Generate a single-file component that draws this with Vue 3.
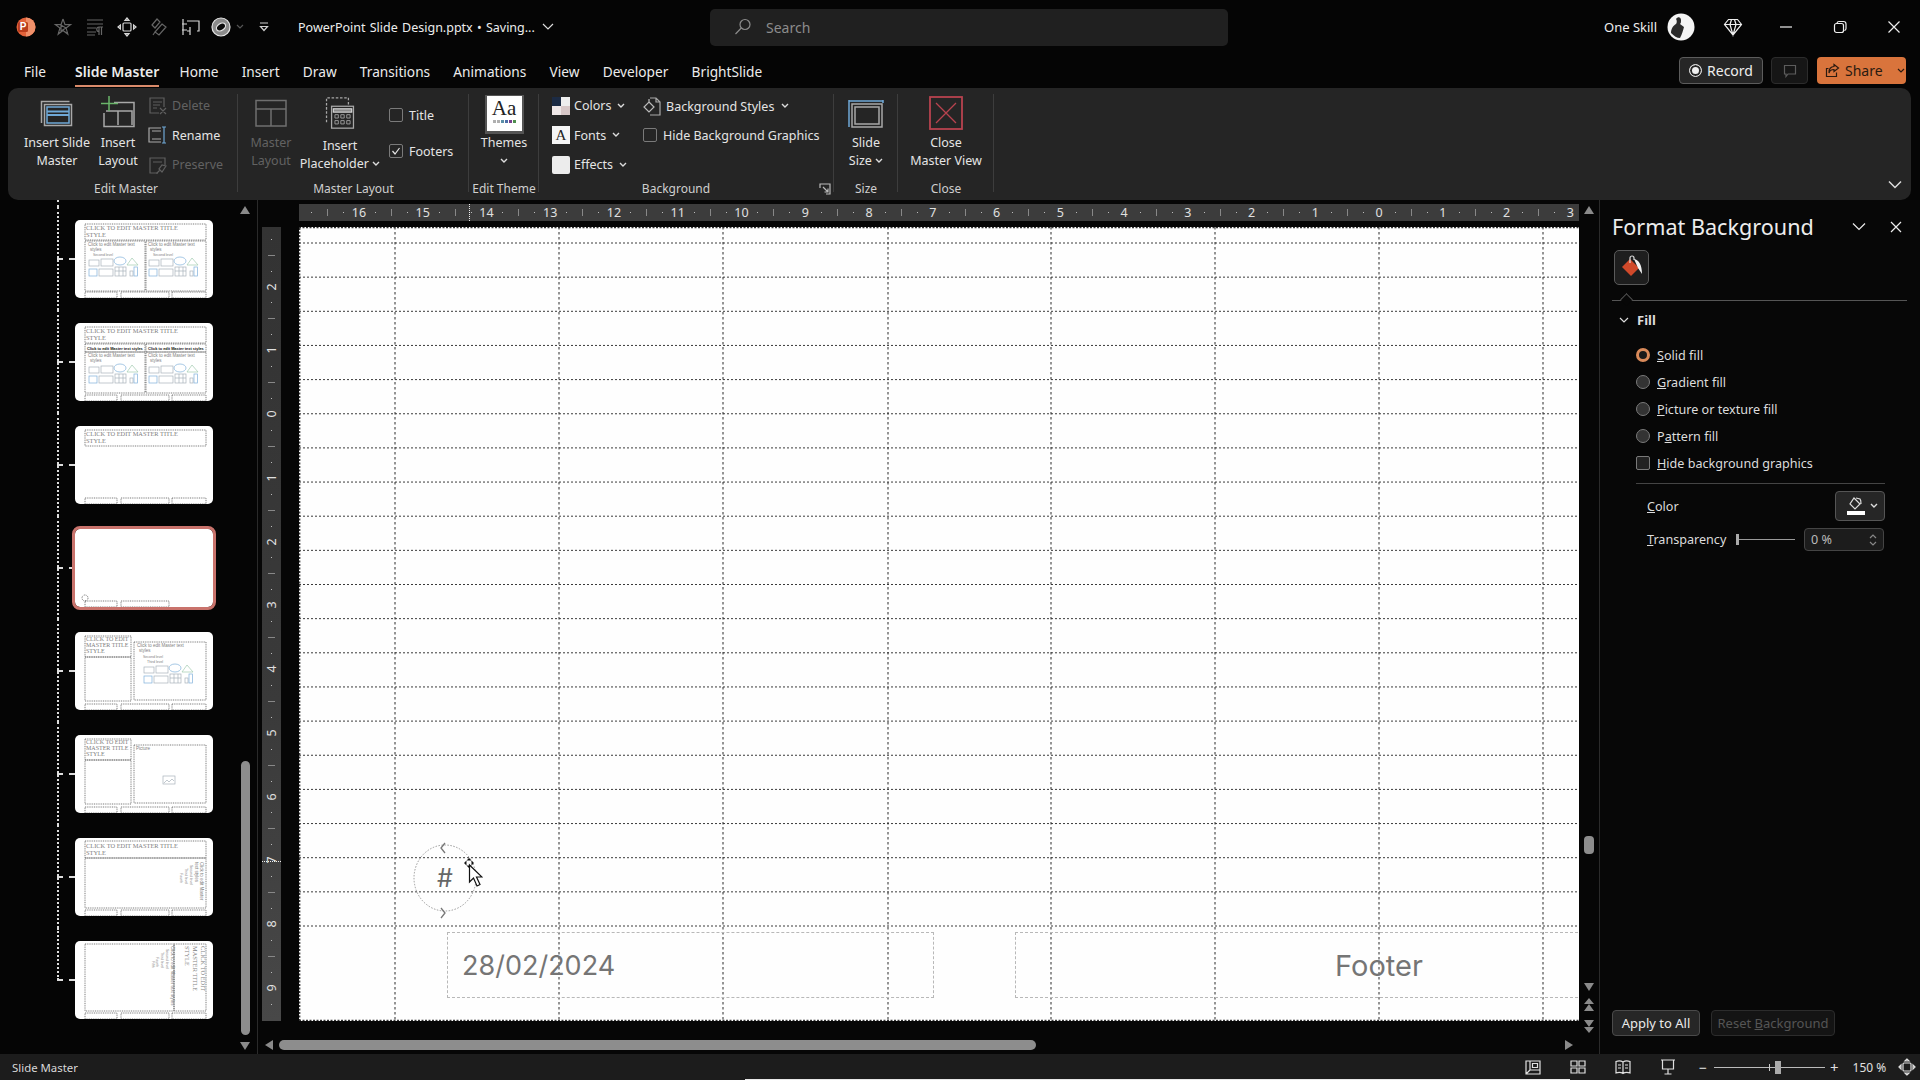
<script setup>
const tabs = ["File", "Slide Master", "Home", "Insert", "Draw", "Transitions", "Animations", "View", "Developer", "BrightSlide"];

// ruler scale, measured from the slide origin
const UNIT = 63.75;
const H_ORIGIN = 1080;
const V_ORIGIN = 187;

function rulerTicks(from, to) {
  const ticks = [];
  for (let q = from * 4; q <= to * 4; q++) {
    const value = q / 4;
    if (q % 4 === 0) ticks.push({ id: q, kind: "num", value, label: Math.abs(value) });
    else if (q % 2 === 0) ticks.push({ id: q, kind: "long", value });
    else ticks.push({ id: q, kind: "dot", value });
  }
  return ticks;
}

const hTicks = rulerTicks(-16.75, 3).map((t) => ({ ...t, pos: H_ORIGIN + t.value * UNIT }));
const vTicks = rulerTicks(-2.75, 9.25).map((t) => ({ ...t, pos: V_ORIGIN + t.value * UNIT }));

const guideX = [96, 260, 424, 589, 752, 916, 1080, 1244];
const guideY = Array.from({ length: 21 }, (_, i) => 16 + i * 34.15);

const T1 = "CLICK TO EDIT MASTER TITLE";
const threeFoot = [[10, 72, 32, 6], [46, 72, 48, 6], [97, 72, 34, 6]];

function wideTitle() {
  return [
    { x: 11, y: 10, t: T1, c: "tt" },
    { x: 11, y: 17, t: "STYLE", c: "tt" },
  ];
}
function narrowTitle() {
  return [
    { x: 11, y: 9, t: "CLICK TO EDIT", c: "tn" },
    { x: 11, y: 15, t: "MASTER TITLE", c: "tn" },
    { x: 11, y: 21, t: "STYLE", c: "tn" },
  ];
}
function bodyLines(x, y) {
  return [
    { x, y, t: "Click to edit Master text", c: "bt" },
    { x: x + 2, y: y + 5, t: "styles", c: "bt" },
    { x: x + 5, y: y + 10, t: "Second level", c: "bs" },
  ];
}

const thumbs = [
  {
    id: 1,
    boxes: [[10, 4, 121, 16], [10, 21, 60, 50], [71, 21, 60, 50], ...threeFoot],
    texts: [...wideTitle(), ...bodyLines(13, 26), ...bodyLines(73, 26)],
    art: [[14, 37], [74, 37]],
  },
  {
    id: 2,
    boxes: [[10, 4, 121, 16], [10, 21, 60, 8], [71, 21, 60, 8], [10, 29, 60, 41], [71, 29, 60, 41], ...threeFoot],
    texts: [
      ...wideTitle(),
      { x: 12, y: 27, t: "Click to edit Master text styles", c: "bh" },
      { x: 73, y: 27, t: "Click to edit Master text styles", c: "bh" },
      { x: 13, y: 34, t: "Click to edit Master text", c: "bt" },
      { x: 15, y: 39, t: "styles", c: "bt" },
      { x: 73, y: 34, t: "Click to edit Master text", c: "bt" },
      { x: 75, y: 39, t: "styles", c: "bt" },
    ],
    art: [[14, 41], [74, 41]],
  },
  { id: 3, boxes: [[10, 4, 121, 16], ...threeFoot], texts: wideTitle(), art: [] },
  { id: 4, selected: true, boxes: [[10, 72, 32, 6], [46, 72, 48, 6]], texts: [], art: [], circle: true },
  {
    id: 5,
    boxes: [[10, 4, 46, 21], [10, 25, 46, 44], [59, 10, 72, 58], ...threeFoot],
    texts: [
      ...narrowTitle(),
      { x: 62, y: 15, t: "Click to edit Master text", c: "bt" },
      { x: 64, y: 20, t: "styles", c: "bt" },
      { x: 68, y: 26, t: "Second level", c: "bs" },
      { x: 72, y: 31, t: "Third level", c: "bs" },
    ],
    art: [[69, 32]],
  },
  {
    id: 6,
    boxes: [[10, 4, 46, 21], [10, 25, 46, 44], [59, 10, 72, 58], ...threeFoot],
    texts: [...narrowTitle(), { x: 61, y: 15, t: "Picture", c: "bt" }],
    art: [],
    picture: true,
  },
  {
    id: 7,
    boxes: [[10, 3, 121, 17], [10, 20, 121, 50], ...threeFoot],
    texts: [
      ...wideTitle(),
      { x: 125, y: 24, t: "Click to edit Master", c: "bt", rot: true },
      { x: 120, y: 24, t: "text styles", c: "bt", rot: true },
      { x: 115, y: 27, t: "Second level", c: "bs", rot: true },
      { x: 110, y: 30, t: "Third level", c: "bs", rot: true },
      { x: 105, y: 35, t: "Fourth", c: "bs", rot: true },
    ],
    art: [],
  },
  {
    id: 8,
    boxes: [[10, 3, 89, 67], [99, 3, 32, 67], ...threeFoot],
    texts: [
      { x: 126, y: 5, t: "CLICK TO EDIT", c: "tt", rot: true },
      { x: 118, y: 5, t: "MASTER TITLE", c: "tt", rot: true },
      { x: 110, y: 5, t: "STYLE", c: "tt", rot: true },
      { x: 96, y: 5, t: "Click to edit Master text styles", c: "bt", rot: true },
      { x: 91, y: 8, t: "Second level", c: "bs", rot: true },
      { x: 86, y: 11, t: "Third level", c: "bs", rot: true },
      { x: 81, y: 16, t: "Fourth", c: "bs", rot: true },
      { x: 77, y: 20, t: "Fifth", c: "bs", rot: true },
    ],
    art: [],
  },
];

const fillOptions = [
  { key: "S", rest: "olid fill", on: true },
  { key: "G", rest: "radient fill" },
  { key: "P", rest: "icture or texture fill" },
  { before: "P", key: "a", rest: "ttern fill" },
];
</script>

<template>
  <div class="app">
    <header class="titlebar">
      <div class="tb-left">
        <svg class="logo" width="22" height="22" viewBox="0 0 22 22">
          <circle cx="11" cy="11" r="9.5" fill="#e2623a" />
          <path d="M11 1.5a9.5 9.5 0 0 1 0 19z" fill="#f0906a" />
          <rect x="3" y="6" width="10" height="10" rx="1.5" fill="#b93c1c" />
          <text x="8" y="14.4" text-anchor="middle" class="logo-p">P</text>
        </svg>
        <div class="qat">
          <svg class="dim" width="20" height="20" viewBox="0 0 20 20"><path d="M10 2l2 5.6h5.6l-4.5 3.5 1.7 6L10 13.4M10 2L8 7.6H2.4l4.5 3.5-1.7 6L10 13.4M8 8v6l5-3z" /></svg>
          <svg class="dim" width="20" height="20" viewBox="0 0 20 20"><path d="M2 3h16M2 7h16M2 11h9M2 15h9M2 18h8M14 18v-8h4M16.5 10v8M14 10a2.2 2.2 0 0 0 0 4.5" /></svg>
          <svg class="lit" width="20" height="20" viewBox="0 0 20 20"><rect x="6" y="6" width="8" height="8" rx="1" /><path d="M10 1L8 3.4h4zM10 19l-2-2.4h4zM1 10l2.4-2v4zM19 10l-2.4-2v4z" /></svg>
          <svg class="dim" width="20" height="20" viewBox="0 0 20 20"><path d="M8 2l3 3-5 6-3-3zM13 7l4 3-7 8-4-3zM6 15l-2 3" /></svg>
          <svg class="lit" width="20" height="20" viewBox="0 0 20 20"><path d="M2 2v16M1 7h5M1 13h5M6 4h12v10h-2M9 14H6M9 10v8" /></svg>
          <svg class="blob" width="20" height="20" viewBox="0 0 20 20"><circle cx="10" cy="10" r="9" fill="#8b8b8b" /><ellipse cx="10" cy="10" rx="5" ry="3.4" transform="rotate(-35 10 10)" fill="#0b0b0b" /></svg>
          <svg class="mini-chev" width="8" height="6" viewBox="0 0 8 6"><path d="M1 1l3 3 3-3" /></svg>
          <svg class="custom" width="12" height="12" viewBox="0 0 12 12"><path d="M2 2h8M2.5 5.5L6 9.5l3.5-4z" /></svg>
        </div>
        <span class="doc-title">PowerPoint Slide Design.pptx • Saving...</span>
        <svg class="doc-chev" width="12" height="8" viewBox="0 0 12 8"><path d="M1 1l5 5 5-5" /></svg>
      </div>
      <div class="search">
        <svg width="20" height="20" viewBox="0 0 20 20"><circle cx="12" cy="7.5" r="5" /><path d="M8.3 11L2.5 17" /></svg>
        <span>Search</span>
      </div>
      <div class="tb-right">
        <span class="user">One Skill</span>
        <svg class="avatar" width="28" height="28" viewBox="0 0 28 28">
          <circle cx="14" cy="14" r="13.5" fill="#f4f4f4" />
          <path d="M4 20c0-5 3-8 5-9 1-1 1-4 0-5 2-3 5-2 5 1 0 2 0 3-1 4l4 3c-1 4-2 7-4 11-3 0-6-2-9-5z" fill="#2b2b2b" />
        </svg>
        <svg class="gem" width="20" height="20" viewBox="0 0 20 20"><path d="M5.500 2.500h9L18.500 7.500 10 18 1.500 7.500zM1.500 7.500h17M7 7.500L10 18l3-10.500M7 7.500l1.500-5M13 7.500l-1.500-5" /></svg>
        <svg class="win" width="14" height="14" viewBox="0 0 14 14"><path d="M1 7h12" /></svg>
        <svg class="win" width="14" height="14" viewBox="0 0 14 14"><rect x="1.500" y="3.500" width="9" height="9" rx="2" /><path d="M4 3.200c.2-1.200 1-1.700 2-1.700h4.500c1.500 0 2.500 1 2.500 2.500V8.500c0 1-.5 1.800-1.700 2" /></svg>
        <svg class="win" width="14" height="14" viewBox="0 0 14 14"><path d="M1.500 1.500l11 11M12.500 1.500l-11 11" /></svg>
      </div>
    </header>

    <nav class="tabsbar">
      <div class="tabs">
        <span v-for="tab in tabs" :key="tab" class="tab" :class="{ active: tab === 'Slide Master' }">{{ tab }}</span>
      </div>
      <div class="tab-actions">
        <button class="btn-record"><i class="rec-dot"></i>Record</button>
        <button class="btn-comment">
          <svg width="14" height="14" viewBox="0 0 14 14"><path d="M1.500 1.500h11v8.500H5L3 12.500V10H1.500z" /></svg>
        </button>
        <button class="btn-share">
          <svg width="15" height="15" viewBox="0 0 15 15"><path d="M9 1.500l4.500 3.500L9 8.500V6.500C6 6.500 4.500 8 4 10c-.5-4 2-6.500 5-6.500zM3.500 5.500h-2v8h10v-4" /></svg>
          <span>Share</span>
          <svg class="share-chev" width="8" height="6" viewBox="0 0 8 6"><path d="M1 1l3 3 3-3" /></svg>
        </button>
      </div>
    </nav>

    <section class="ribbon">
      <div class="rgroup g-editmaster">
        <div class="rbody">
          <div class="big w74">
            <svg class="bigicon" width="34" height="38" viewBox="0 -3 34 38">
              <path class="g" d="M1.500 24V2.500h28" />
              <rect class="g" x="4.500" y="5.500" width="27" height="21" />
              <rect x="7" y="8" width="22" height="16" fill="none" stroke="#6fa8d6" stroke-width="1.500" />
              <path d="M7 12.500h22M7 16h22" stroke="#6fa8d6" stroke-width="2" />
            </svg>
            <span>Insert Slide</span><span>Master</span>
          </div>
          <div class="big w48">
            <svg class="bigicon" width="36" height="38" viewBox="0 1 36 38">
              <path class="g" d="M14 7.500h20v24H4V18" />
              <path class="g" d="M6 16h26v14M18 16v14" />
              <path d="M9 1v15M1 8.500h17" stroke="#6ab56a" stroke-width="1.500" fill="none" />
            </svg>
            <span>Insert</span><span>Layout</span>
          </div>
          <div class="small-col">
            <div class="srow off">
              <svg width="20" height="20" viewBox="0 0 20 20"><path d="M16 11V2H2v15h9M5 6h9M5 9h7M5 12h4M12 12l6 6M18 12l-6 6" /></svg>
              <span>Delete</span>
            </div>
            <div class="srow">
              <svg width="20" height="20" viewBox="0 0 20 20"><path d="M13 3H1v14h12M4 6h9M4 14h9" /><path class="blue" d="M16 2v16M14 2h4M14 18h4" /></svg>
              <span>Rename</span>
            </div>
            <div class="srow off">
              <svg width="20" height="20" viewBox="0 0 20 20"><path d="M10 18H2V3h15v7M5 7h9" /><path d="M18 11l-4-1-3 4 3 3zM11.500 15.500l-3 3" /></svg>
              <span>Preserve</span>
            </div>
          </div>
        </div>
        <div class="rlabel">Edit Master</div>
      </div>

      <div class="rgroup g-masterlayout">
        <div class="rbody">
          <div class="big w50 off">
            <svg class="bigicon" width="32" height="38" viewBox="0 0 32 38">
              <rect class="g" x="1" y="4.500" width="30" height="25.500" />
              <path class="g" d="M1 13h30M16 13v17" />
            </svg>
            <span>Master</span><span>Layout</span>
          </div>
          <div class="big w88 down1">
            <svg class="bigicon" width="34" height="40" viewBox="-3 0 40 47.500">
              <path class="g dash" d="M1 30V1h26v8" />
              <rect class="g" x="7" y="11" width="26" height="26" />
              <rect x="9" y="14" width="22" height="4" fill="#8a8a8a" />
              <path class="g thin" d="M11 21h4v4h-4zM18 21h4v4h-4zM25 21h4v4h-4zM11 28h4v4h-4zM18 28h4v4h-4zM25 28h4v4h-4z" />
            </svg>
            <span>Insert</span>
            <span>Placeholder <svg class="chev" width="8" height="6" viewBox="0 0 8 6"><path d="M1 1l3 3 3-3" /></svg></span>
          </div>
          <div class="checks">
            <label class="chk"><i class="box"></i>Title</label>
            <label class="chk"><i class="box"><svg width="12" height="12" viewBox="0 0 12 12"><path d="M2.500 6l2.500 3 4.500-6" /></svg></i>Footers</label>
          </div>
        </div>
        <div class="rlabel">Master Layout</div>
      </div>

      <div class="rgroup g-theme">
        <div class="rbody">
          <div class="big w70">
            <div class="theme-tile">
              <span class="aa">Aa</span>
              <div class="dots"><i></i><i></i><i></i><i></i><i></i><i></i></div>
            </div>
            <span>Themes</span>
            <svg class="chev solo" width="8" height="6" viewBox="0 0 8 6"><path d="M1 1l3 3 3-3" /></svg>
          </div>
        </div>
        <div class="rlabel">Edit Theme</div>
      </div>

      <div class="rgroup g-background">
        <div class="rbody">
          <div class="small-col bg-col1">
            <div class="srow">
              <svg class="swatch" width="18" height="18" viewBox="0 0 18 18">
                <rect width="18" height="18" fill="#eee" />
                <rect width="9" height="9" fill="#1c2b44" />
                <rect x="9" y="9" width="9" height="9" fill="#d8c8c8" />
                <rect y="9" width="9" height="9" fill="#efe8e8" />
              </svg>
              <span>Colors</span><svg class="chev" width="8" height="6" viewBox="0 0 8 6"><path d="M1 1l3 3 3-3" /></svg>
            </div>
            <div class="srow">
              <span class="font-tile">A</span>
              <span>Fonts</span><svg class="chev" width="8" height="6" viewBox="0 0 8 6"><path d="M1 1l3 3 3-3" /></svg>
            </div>
            <div class="srow">
              <i class="effect-tile"></i>
              <span>Effects</span><svg class="chev" width="8" height="6" viewBox="0 0 8 6"><path d="M1 1l3 3 3-3" /></svg>
            </div>
          </div>
          <div class="bg-col2">
            <div class="srow">
              <svg width="18" height="20" viewBox="0 0 18 20"><path d="M7 2h6l4 4v13H7M13 2v4h4" /><path d="M6 6l5 5-5 5-5-5zM6 6V3" stroke="#bbb" /></svg>
              <span>Background Styles</span><svg class="chev" width="8" height="6" viewBox="0 0 8 6"><path d="M1 1l3 3 3-3" /></svg>
            </div>
            <label class="chk"><i class="box"></i>Hide Background Graphics</label>
          </div>
        </div>
        <div class="rlabel">Background</div>
        <svg class="launcher" width="12" height="12" viewBox="0 0 12 12"><path d="M1 5V1h10v10H7M4 4l5 5M9 5.500V9H5.500" /></svg>
      </div>

      <div class="rgroup g-size">
        <div class="rbody">
          <div class="big w64">
            <svg class="bigicon" width="36" height="38" viewBox="0 -3 36 38">
              <path d="M1 28V2h34M1 2v-1M35 1v3" fill="none" stroke="#6fa8d6" stroke-width="1.500" />
              <rect class="g" x="4" y="5" width="30" height="23" />
              <rect class="g" x="7" y="8" width="24" height="17" />
            </svg>
            <span>Slide</span>
            <span>Size <svg class="chev" width="8" height="6" viewBox="0 0 8 6"><path d="M1 1l3 3 3-3" /></svg></span>
          </div>
        </div>
        <div class="rlabel">Size</div>
      </div>

      <div class="rgroup g-close">
        <div class="rbody">
          <div class="big w96">
            <svg class="bigicon" width="34" height="38" viewBox="0 0 34 38">
              <rect x="1" y="1" width="32" height="32" fill="none" stroke="#b8434f" stroke-width="1.800" />
              <path d="M7 7l20 20M27 7L7 27" stroke="#b8434f" stroke-width="1.300" />
            </svg>
            <span>Close</span><span>Master View</span>
          </div>
        </div>
        <div class="rlabel">Close</div>
      </div>

      <svg class="collapse" width="14" height="9" viewBox="0 0 14 9"><path d="M1 1.500l6 6 6-6" /></svg>
    </section>

    <main class="workspace">
      <aside class="thumbs">
        <div class="thumb-list">
          <div class="tree-top"></div>
          <div v-for="(thumb, i) in thumbs" :key="thumb.id" class="thumb-row" :class="{ last: i === thumbs.length - 1 }">
            <i class="branch"></i>
            <div class="thumb" :class="{ selected: thumb.selected }">
              <svg width="138" height="78" viewBox="0 0 138 78">
                <rect v-for="(b, n) in thumb.boxes" :key="n" class="t-box" :x="b[0]" :y="b[1]" :width="b[2]" :height="b[3]" />
                <text
                  v-for="(line, n) in thumb.texts"
                  :key="'t' + n"
                  :class="line.c"
                  :x="line.x"
                  :y="line.y"
                  :transform="line.rot ? `rotate(90 ${line.x} ${line.y})` : undefined"
                >{{ line.t }}</text>
                <g v-for="(a, n) in thumb.art" :key="'a' + n" class="t-art" :transform="`translate(${a[0]} ${a[1]})`">
                  <rect x="0" y="3" width="10" height="6" />
                  <rect x="12" y="2" width="12" height="7" />
                  <ellipse cx="31" cy="4" rx="6" ry="4" class="a-blue" />
                  <path d="M38 8l5-7 6 7z" class="a-green" />
                  <rect x="0" y="12" width="8" height="7" class="a-blue" />
                  <rect x="10" y="12" width="14" height="7" />
                  <rect x="26" y="10" width="11" height="9" />
                  <path d="M30 10v9M34 10v9M26 14h11" />
                  <rect x="41" y="14" width="3" height="5" />
                  <rect x="45" y="10" width="3.500" height="9" class="a-blue" />
                </g>
                <g v-if="thumb.picture" class="t-art" transform="translate(88 41)">
                  <rect width="12" height="8" />
                  <path d="M1 7l3-3 2 2 3-3 2 2" />
                </g>
                <ellipse v-if="thumb.circle" class="t-box" cx="10" cy="69" rx="3" ry="3" />
              </svg>
            </div>
          </div>
        </div>
        <div class="thumb-scroll">
          <i class="tri up"></i>
          <div class="thumb-track"><i class="thumb-knob"></i></div>
          <i class="tri down"></i>
        </div>
      </aside>

      <section class="editor">
        <div class="h-ruler">
          <template v-for="t in hTicks" :key="t.id">
            <span v-if="t.kind === 'num'" class="r-num" :style="{ left: t.pos + 'px' }">{{ t.label }}</span>
            <i v-else :class="t.kind === 'long' ? 'r-long' : 'r-dot'" :style="{ left: t.pos + 'px' }"></i>
          </template>
          <i class="h-mark"></i>
        </div>

        <div class="v-ruler">
          <template v-for="t in vTicks" :key="t.id">
            <span v-if="t.kind === 'num'" class="rv-num" :style="{ top: t.pos + 'px' }">{{ t.label }}</span>
            <i v-else :class="t.kind === 'long' ? 'rv-long' : 'rv-dot'" :style="{ top: t.pos + 'px' }"></i>
          </template>
          <i class="v-mark"></i>
        </div>

        <div class="slide">
          <svg class="guides" width="1280" height="794" viewBox="0 0 1280 794">
            <path class="edge" d="M.7 794V0M0 .7H1280M0 793.300H1280" />
            <line v-for="y in guideY" :key="'h' + y" class="guide-h" x1="0" x2="1280" :y1="y" :y2="y" />
            <line v-for="x in guideX" :key="'v' + x" class="guide-v" :x1="x" :x2="x" y1="0" y2="794" />
            <ellipse class="page-ring" cx="146" cy="651" rx="31" ry="33" />
            <path class="page-handle" d="M146 616l-4 5 4 5M142 681l4 5-4 5" />
          </svg>
          <div class="ph date"><span>28/02/2024</span></div>
          <div class="ph foot"><span>Footer</span></div>
          <span class="page-num">#</span>
          <svg class="pointer" width="20" height="34" viewBox="0 0 20 34">
            <path d="M6 1l2.500 2.500h-5zM6 11l2.500-2.500h-5zM1 6l2.500-2.500v5zM11 6L8.500 3.500v5z" fill="#111" />
            <path d="M6.500 8v17l4-4 3.500 8 3-1.500-3.500-7.500h5.500z" fill="#fff" stroke="#111" />
          </svg>
        </div>

        <div class="v-scroll">
          <i class="tri up"></i>
          <div class="v-track"><i class="v-knob"></i></div>
          <i class="tri down"></i>
          <svg class="dbl" width="14" height="14" viewBox="0 0 14 14"><path d="M7 0l5 6H2zM7 6l5 7H2z" /></svg>
          <svg class="dbl" width="14" height="14" viewBox="0 0 14 14"><path d="M7 14l5-6H2zM7 8l5-7H2z" /></svg>
        </div>

        <div class="h-scroll">
          <i class="tri left"></i>
          <div class="h-track"><i class="h-knob"></i></div>
          <i class="tri right"></i>
        </div>
      </section>

      <aside class="pane">
        <div class="pane-head">
          <h2>Format Background</h2>
          <svg width="14" height="9" viewBox="0 0 14 9"><path d="M1 1.500l6 6 6-6" /></svg>
          <svg width="12" height="12" viewBox="0 0 12 12"><path d="M1 1l10 10M11 1L1 11" /></svg>
        </div>
        <div class="pane-tabs">
          <div class="fill-tab">
            <svg width="28" height="28" viewBox="0 0 28 28">
              <path d="M12 5l9 9-8 8-9-9z" fill="#d0492a" />
              <path d="M12 9V4a2 2 0 0 1 4 0v2" fill="none" stroke="#ddd" stroke-width="1.200" />
              <path d="M16 5c5 1 8 6 8 15-1.500-2-2.500-4-4-6z" fill="#f2f2f2" />
            </svg>
          </div>
        </div>
        <div class="pane-rule"><i></i></div>
        <div class="section-head">
          <svg width="10" height="7" viewBox="0 0 10 7"><path d="M1 1l4 4 4-4" /></svg>
          <strong>Fill</strong>
        </div>
        <div class="options">
          <label v-for="opt in fillOptions" :key="opt.rest" class="opt">
            <i class="radio" :class="{ on: opt.on }"></i>
            <span>{{ opt.before }}<u>{{ opt.key }}</u>{{ opt.rest }}</span>
          </label>
          <label class="opt">
            <i class="square"></i>
            <span><u>H</u>ide background graphics</span>
          </label>
        </div>
        <div class="pane-sep"></div>
        <div class="prop color-prop">
          <span><u>C</u>olor</span>
          <button class="color-btn">
            <svg width="20" height="20" viewBox="0 0 20 20">
              <path d="M8 2l6 6-5 5-5-5zM10 2l4 1c1 1 1 3 1 5" fill="none" stroke="#ddd" stroke-width="1.200" />
              <rect x="1" y="15" width="18" height="4" fill="#fff" />
            </svg>
            <svg class="chev lit-chev" width="8" height="6" viewBox="0 0 8 6"><path d="M1 1l3 3 3-3" /></svg>
          </button>
        </div>
        <div class="prop trans-prop">
          <span class="trans-label"><u>T</u>ransparency</span>
          <div class="slider"><i></i></div>
          <div class="spin">
            <span>0 %</span>
            <div class="spin-arrows">
              <svg width="8" height="5" viewBox="0 0 8 5"><path d="M1 4l3-3 3 3" /></svg>
              <svg width="8" height="5" viewBox="0 0 8 5"><path d="M1 1l3 3 3-3" /></svg>
            </div>
          </div>
        </div>
        <div class="pane-actions">
          <button class="act">Apply to All</button>
          <button class="act disabled">Reset <u>B</u>ackground</button>
        </div>
      </aside>
    </main>

    <footer class="statusbar">
      <span class="st-label">Slide Master</span>
      <div class="st-right">
        <svg width="16" height="15" viewBox="0 0 16 15"><path d="M1 1h14v13H1zM5 1v9h10M7.500 3.500h5v4h-5zM5 10l-4 4" /></svg>
        <svg class="gap-s" width="16" height="14" viewBox="0 0 16 14"><path d="M1 1h6v5H1zM9 1h6v5H9zM1 8h6v5H1zM9 8h6v5H9z" /></svg>
        <svg class="gap-s" width="16" height="15" viewBox="0 0 16 15"><path d="M1 1.500c2.500-.8 5-.8 7 .5 2-1.300 4.500-1.300 7-.5v11.500c-2.500-.8-5-.8-7 .5-2-1.300-4.500-1.300-7-.5zM8 2v11.500M3 5h3M3 8h3M10 5h3M10 8h3" /></svg>
        <svg class="gap-s" width="16" height="16" viewBox="0 0 16 16"><path d="M1 1h14M2.500 1v9h11V1M8 10v5M4.500 15h7" /></svg>
        <span class="zoom-minus">−</span>
        <div class="zoom-track"><i class="zoom-center"></i><i class="zoom-knob"></i></div>
        <span class="zoom-plus">+</span>
        <span class="zoom-val">150 %</span>
        <svg class="fit" width="18" height="18" viewBox="0 0 18 18"><rect x="5" y="5" width="8" height="8" rx="1" /><path d="M9 1L7 3h4zM9 17l-2-2h4zM1 9l2-2v4zM17 9l-2-2v4z" /></svg>
      </div>
    </footer>
  </div>
</template>

<style>
html,
body {
  margin: 0;
  background: #050505;
}
</style>

<style scoped>
.app {
  width: 1920px;
  height: 1080px;
  overflow: hidden;
  display: flex;
  flex-direction: column;
  background: #050505;
  color: #e6e6e6;
  font-family: "Noto Sans", "Open Sans", sans-serif;
  font-size: 13px;
}

svg {
  flex: none;
  fill: none;
  stroke: currentColor;
  stroke-width: 1.2;
}

button {
  font-family: inherit;
  padding: 0;
  cursor: default;
}

/* title bar */
.titlebar {
  height: 56px;
  flex: none;
  display: flex;
  align-items: center;
  padding-bottom: 2px;
  box-sizing: border-box;
}

.tb-left {
  width: 710px;
  display: flex;
  align-items: center;
  padding-left: 15px;
  box-sizing: border-box;
}

.logo {
  stroke: none;
}

.logo-p {
  font: 700 10px "Liberation Sans", sans-serif;
  fill: #fff;
  stroke: none;
}

.qat {
  display: flex;
  align-items: center;
  gap: 12px;
  margin-left: 16px;
}

.qat .dim {
  color: #666;
}

.qat .lit {
  color: #d8d8d8;
}

.qat .blob {
  margin-left: -2px;
}

.qat .mini-chev {
  color: #555;
  margin-left: -7px;
}

.qat .custom {
  color: #cfcfcf;
  margin-left: 2px;
}

.doc-title {
  margin-left: 28px;
  font-size: 12.5px;
  color: #ededed;
  white-space: nowrap;
  word-spacing: 1px;
}

.doc-chev {
  margin-left: 7px;
  color: #ddd;
}

.search {
  width: 518px;
  height: 37px;
  border-radius: 5px;
  background: #202020;
  display: flex;
  align-items: center;
  gap: 13px;
  padding-left: 23px;
  box-sizing: border-box;
  color: #8c8c8c;
  font-size: 14px;
}

.tb-right {
  flex: 1;
  display: flex;
  align-items: center;
  padding-left: 376px;
  color: #eee;
}

.user {
  font-size: 13px;
  white-space: nowrap;
}

.avatar {
  margin-left: 10px;
  stroke: none;
}

.gem {
  margin-left: 28px;
}

.win {
  margin-left: 36px;
}

.gem + .win {
  margin-left: 36px;
}

.win + .win {
  margin-left: 40px;
}

/* tabs */
.tabsbar {
  height: 32px;
  flex: none;
  display: flex;
  align-items: center;
  justify-content: space-between;
  padding: 0 14px 0 24px;
}

.tabs {
  display: flex;
  gap: 23.2px;
}

.tab {
  font-size: 13.7px;
  line-height: 26px;
  color: #ececec;
  white-space: nowrap;
  position: relative;
}

.tab:first-child {
  margin-right: 6px;
}

.tab.active {
  font-size: 14px;
  font-weight: 600;
  margin-right: -3px;
}

.tab.active::after {
  content: "";
  position: absolute;
  left: 0;
  right: 0;
  bottom: -2px;
  height: 2px;
  background: #d98a6a;
}

.tab-actions {
  display: flex;
  align-items: center;
  height: 28px;
  margin-top: -3px;
}

.btn-record {
  width: 84px;
  height: 27px;
  box-sizing: border-box;
  border: 1px solid #5c5c5c;
  border-radius: 4px;
  background: #262626;
  color: #eee;
  font-size: 14px;
  display: flex;
  align-items: center;
  justify-content: center;
  gap: 5px;
}

.rec-dot {
  width: 13px;
  height: 13px;
  box-sizing: border-box;
  border-radius: 50%;
  border: 1px solid #ddd;
  background: #eee;
  box-shadow: inset 0 0 0 2px #262626;
}

.btn-comment {
  width: 37px;
  height: 27px;
  margin-left: 8px;
  box-sizing: border-box;
  border: 1px solid #2c2c2c;
  border-radius: 4px;
  background: #161616;
  color: #5c5c5c;
  display: flex;
  align-items: center;
  justify-content: center;
}

.btn-share {
  width: 89px;
  height: 27px;
  margin-left: 9px;
  border: 0;
  border-radius: 4px;
  background: #d9743c;
  color: #2a1a10;
  font-size: 14px;
  display: flex;
  align-items: center;
  padding-left: 8px;
  box-sizing: border-box;
  gap: 5px;
}

.share-chev {
  margin-left: 9px;
}

/* ribbon */
.ribbon {
  height: 112px;
  flex: none;
  margin: 0 9px 0 8px;
  border-radius: 10px;
  background: #252525;
  display: flex;
  position: relative;
  font-size: 12.5px;
  color: #e4e4e4;
}

.rgroup {
  display: flex;
  flex-direction: column;
  position: relative;
  box-sizing: border-box;
}

.rgroup::after {
  content: "";
  position: absolute;
  right: 0;
  top: 6px;
  bottom: 8px;
  width: 1px;
  background: #3d3d3d;
}

.rbody {
  height: 91px;
  display: flex;
}

.rlabel {
  height: 20px;
  line-height: 20px;
  text-align: center;
  font-size: 12px;
  color: #cfcfcf;
}

.g-editmaster {
  width: 230px;
  padding-left: 12px;
}

.g-editmaster .rlabel {
  margin-left: -6px;
}

.g-masterlayout {
  width: 231px;
  padding-left: 8px;
}

.g-masterlayout .rlabel {
  margin-left: -8px;
}

.g-theme {
  width: 70px;
}

.g-background {
  width: 295px;
  padding-left: 13px;
}

.g-background .rlabel {
  margin: 0 21px 0 -13px;
}

.g-size {
  width: 64px;
}

.g-close {
  width: 96px;
}

.big {
  display: flex;
  flex-direction: column;
  align-items: center;
  padding-top: 8px;
  line-height: 18px;
  white-space: nowrap;
  box-sizing: border-box;
}

.big span {
  display: block;
}

.bigicon .g {
  stroke: #a8a8a8;
  stroke-width: 1.500;
}

.bigicon .thin {
  stroke-width: 1;
}

.bigicon .dash {
  stroke-dasharray: 3 2;
}

.w74 {
  width: 74px;
}

.w48 {
  width: 48px;
}

.w50 {
  width: 50px;
}

.w88 {
  width: 88px;
}

.w70 {
  width: 70px;
}

.w64 {
  width: 64px;
}

.w96 {
  width: 96px;
}

.down1 {
  padding-top: 9px;
}

.off,
.off svg {
  color: #626262;
}

.off .g {
  stroke: #6f6f6f;
}

.small-col {
  display: flex;
  flex-direction: column;
  justify-content: center;
  gap: 9.5px;
  margin-left: 6px;
  padding-top: 3px;
}

.srow {
  display: flex;
  align-items: center;
  gap: 4px;
  height: 20px;
  white-space: nowrap;
}

.srow svg {
  color: #aaa;
}

.srow.off svg {
  color: #5f5f5f;
}

.srow .blue {
  stroke: #6fa8d6;
}

.chev {
  display: inline-block;
  stroke-width: 1.400;
  color: #ddd;
  vertical-align: 1px;
}

.chev.solo {
  margin-top: 6px;
}

.srow .chev {
  color: #ddd;
  margin-left: 2px;
}

.checks {
  display: flex;
  flex-direction: column;
  gap: 16px;
  margin-left: 5px;
  padding-top: 17px;
}

.chk {
  display: flex;
  align-items: center;
  gap: 6px;
  height: 20px;
  white-space: nowrap;
}

.box {
  width: 14px;
  height: 14px;
  box-sizing: border-box;
  border: 1px solid #7a7a7a;
  border-radius: 2px;
  display: flex;
  align-items: center;
  justify-content: center;
}

.theme-tile {
  width: 35px;
  height: 35px;
  margin-bottom: 3px;
  background: #fff;
  box-shadow: 0 1px 0 2px #555;
  display: flex;
  flex-direction: column;
  align-items: center;
  overflow: hidden;
}

.aa {
  font: 21px/24px "Liberation Serif", serif;
  color: #222;
}

.dots {
  display: flex;
  gap: 1px;
}

.dots i {
  width: 3px;
  height: 3px;
  background: #b0b0b0;
}

.dots i:nth-child(3) {
  background: #5b8fa8;
}

.dots i:nth-child(4) {
  background: #4d6fa8;
}

.dots i:nth-child(5) {
  background: #7a3f8f;
}

.dots i:nth-child(6) {
  background: #4f8f4f;
}

.bg-col1 {
  width: 91px;
  margin-left: 0;
}

.swatch,
.srow .swatch {
  stroke: none;
}

.font-tile {
  width: 18px;
  height: 18px;
  background: #f5f5f5;
  color: #222;
  font: 15px/18px "Liberation Serif", serif;
  text-align: center;
}

.effect-tile {
  width: 18px;
  height: 18px;
  border-radius: 2px;
  background: #ececec;
}

.bg-col2 {
  display: flex;
  flex-direction: column;
  gap: 9px;
  padding-top: 8px;
}

.bg-col2 .srow {
  gap: 5px;
}

.launcher {
  position: absolute;
  right: 3px;
  bottom: 5px;
  color: #bbb;
}

.collapse {
  position: absolute;
  right: 9px;
  bottom: 11px;
  color: #ddd;
  stroke-width: 1.500;
}

/* workspace */
.workspace {
  flex: 1;
  min-height: 0;
  display: flex;
}

.thumbs {
  width: 258px;
  flex: none;
  display: flex;
  box-sizing: border-box;
  border-right: 1px solid #2a2a2a;
  overflow: hidden;
}

.thumb-list {
  width: 238px;
  flex: none;
  padding-left: 57px;
  box-sizing: border-box;
}

.tree-top {
  height: 7px;
  border-left: 2px dotted #ddd;
}

.thumb-row {
  height: 103px;
  display: flex;
  align-items: center;
  position: relative;
}

.thumb-row::before {
  content: "";
  position: absolute;
  left: 0;
  top: 0;
  bottom: 0;
  border-left: 2px dotted #ddd;
}

.thumb-row.last::before {
  bottom: 50%;
}

.branch {
  width: 18px;
  flex: none;
  border-top: 2px dashed #ddd;
}

.thumb {
  width: 138px;
  height: 78px;
  flex: none;
  background: #fff;
  border-radius: 5px;
  overflow: hidden;
}

.thumb.selected {
  outline: 3px solid #c9736c;
  outline-offset: 0;
  box-shadow: 0 0 0 1px #000;
}

.thumb svg {
  display: block;
  stroke: none;
}

.t-box {
  fill: none;
  stroke: #444;
  stroke-width: 0.7;
  stroke-dasharray: 1 0.8;
}

.tt {
  font: 6.4px "Liberation Serif", serif;
  fill: #808080;
}

.tn {
  font: 6px "Liberation Serif", serif;
  fill: #808080;
}

.bt {
  font: 4.5px "Liberation Sans", sans-serif;
  fill: #808080;
}

.bs {
  font: 3.500px "Liberation Sans", sans-serif;
  fill: #808080;
}

.bh {
  font: 700 3.900px "Liberation Sans", sans-serif;
  fill: #111;
}

.t-art {
  fill: none;
  stroke: #a8b2ba;
  stroke-width: 0.7;
}

.a-blue {
  stroke: #7fb0da;
}

.a-green {
  stroke: #a2cbb0;
}

.thumb-scroll {
  width: 10px;
  margin-left: 2px;
  display: flex;
  flex-direction: column;
  align-items: center;
  padding: 6px 0 4px;
  box-sizing: border-box;
  height: 100%;
}

.thumb-track {
  flex: 1;
  width: 9px;
  position: relative;
  margin: 3px 0;
}

.thumb-knob {
  position: absolute;
  left: 0;
  right: 0;
  top: 544px;
  height: 274px;
  border-radius: 5px;
  background: #8d8d8d;
}

.tri {
  width: 0;
  height: 0;
  flex: none;
  border-style: solid;
  border-color: transparent;
}

.tri.up {
  border-width: 0 5px 8px;
  border-bottom-color: #8a8a8a;
}

.tri.down {
  border-width: 8px 5px 0;
  border-top-color: #8a8a8a;
}

.tri.left {
  border-width: 5px 8px 5px 0;
  border-right-color: #8a8a8a;
}

.tri.right {
  border-width: 5px 0 5px 8px;
  border-left-color: #8a8a8a;
}

/* editor */
.editor {
  width: 1341px;
  flex: none;
  box-sizing: border-box;
  padding: 4px 0 0 4px;
  display: grid;
  grid-template-columns: 19px 18px 1280px 2px 15px;
  grid-template-rows: 17px 6px 794px 33px;
  background: #060606;
}

.h-ruler {
  grid-column: 3;
  grid-row: 1;
  position: relative;
  background: #3c3c3c;
  overflow: hidden;
}

.r-num {
  position: absolute;
  top: 0;
  line-height: 17px;
  font-size: 12.5px;
  color: #e0e0e0;
  transform: translateX(-50%);
}

.r-dot {
  position: absolute;
  top: 8px;
  width: 1px;
  height: 1px;
  background: #bbb;
}

.r-long {
  position: absolute;
  top: 5px;
  width: 1px;
  height: 7px;
  background: #888;
}

.h-mark {
  position: absolute;
  left: 170px;
  top: 0;
  bottom: 0;
  border-left: 1px dotted #eee;
}

.v-ruler {
  grid-column: 1;
  grid-row: 3;
  position: relative;
  background: linear-gradient(#333, #3a3a3a 60%, #484848);
  overflow: hidden;
}

.rv-num {
  position: absolute;
  left: 0;
  width: 19px;
  line-height: 14px;
  margin-top: -7px;
  font-size: 12.5px;
  text-align: center;
  color: #e0e0e0;
  transform: rotate(-90deg);
}

.rv-dot {
  position: absolute;
  left: 9px;
  width: 1px;
  height: 1px;
  background: #bbb;
}

.rv-long {
  position: absolute;
  left: 6px;
  width: 7px;
  height: 1px;
  background: #888;
}

.v-mark {
  position: absolute;
  left: 0;
  right: 0;
  top: 634px;
  border-top: 1px dotted #eee;
}

.slide {
  grid-column: 3;
  grid-row: 3;
  position: relative;
  overflow: hidden;
  background: #fefefe;
}

.guides {
  position: absolute;
  inset: 0;
  stroke: none;
}

.edge {
  stroke: #333;
  stroke-width: 1.300;
  stroke-dasharray: 2 1.500;
}

.guide-h {
  stroke: #3a3a3a;
  stroke-width: 1;
  stroke-dasharray: 2 2;
}

.guide-v {
  stroke: #2a2a2a;
  stroke-width: 1;
  stroke-dasharray: 2.500 2.500;
}

.page-ring {
  fill: none;
  stroke: #999;
  stroke-dasharray: 1.500 1.500;
  stroke-width: 1;
}

.page-handle {
  fill: none;
  stroke: #777;
  stroke-width: 1.300;
}

.ph {
  position: absolute;
  top: 705px;
  height: 66px;
  box-sizing: border-box;
  border: 1px dashed #b8b8b8;
  display: flex;
  align-items: center;
  color: #757575;
  font-family: Inter, "Noto Sans", sans-serif;
  font-size: 29px;
}

.date {
  left: 148px;
  width: 487px;
  padding-left: 14px;
  font-size: 27px;
}

.foot {
  left: 716px;
  width: 728px;
  justify-content: center;
}

.page-num {
  position: absolute;
  left: 146px;
  top: 636px;
  transform: translateX(-50%);
  font-family: Inter, sans-serif;
  font-size: 25px;
  line-height: 30px;
  color: #666;
}

.pointer {
  position: absolute;
  left: 164px;
  top: 630px;
  stroke: none;
}

.v-scroll {
  grid-column: 5;
  grid-row: 1 / 5;
  display: flex;
  flex-direction: column;
  align-items: center;
  padding: 2px 0 21px;
  box-sizing: border-box;
}

.v-track {
  flex: 1;
  width: 10px;
  position: relative;
}

.v-knob {
  position: absolute;
  left: 0;
  right: 0;
  top: 622px;
  height: 18px;
  border-radius: 4px;
  background: #8d8d8d;
}

.dbl {
  margin-top: 7px;
  fill: #8a8a8a;
  stroke: none;
}

.h-scroll {
  grid-column: 1 / 4;
  grid-row: 4;
  display: flex;
  align-items: center;
  gap: 5px;
  padding: 14px 6px 0 3px;
  height: 33px;
  box-sizing: border-box;
}

.h-track {
  flex: 1;
  height: 10px;
  position: relative;
}

.h-knob {
  position: absolute;
  left: 1px;
  top: 0;
  width: 757px;
  height: 10px;
  border-radius: 5px;
  background: #8d8d8d;
}

/* format pane */
.pane {
  flex: 1;
  position: relative;
  border-left: 1px solid #2a2a2a;
  box-sizing: border-box;
  padding-left: 12px;
  display: flex;
  flex-direction: column;
  background: #070707;
  color: #dcdcdc;
  font-size: 12.6px;
}

.pane-head {
  height: 50px;
  display: flex;
  align-items: center;
  padding-top: 3px;
  box-sizing: border-box;
  color: #ededed;
}

.pane-head h2 {
  margin: 0;
  font-size: 21.6px;
  font-weight: 400;
  width: 240px;
  white-space: nowrap;
}

.pane-head svg:last-child {
  margin-left: 24px;
}

.fill-tab {
  width: 35px;
  height: 35px;
  box-sizing: border-box;
  border: 1px solid #5a5a5a;
  border-radius: 5px;
  background: #1e1e1e;
  margin-left: 2px;
  display: flex;
  align-items: center;
  justify-content: center;
}

.fill-tab svg {
  stroke: none;
}

.pane-rule {
  margin-top: 15px;
  width: 295px;
  height: 1px;
  background: #555;
  position: relative;
}

.pane-rule i {
  position: absolute;
  left: 10px;
  top: -5px;
  width: 9px;
  height: 9px;
  box-sizing: border-box;
  border-left: 1px solid #555;
  border-top: 1px solid #555;
  background: #070707;
  transform: rotate(45deg);
}

.section-head {
  display: flex;
  align-items: center;
  gap: 8px;
  margin: 9px 0 0 7px;
  height: 20px;
}

.section-head strong {
  font-size: 13px;
  font-weight: 700;
}

.options {
  margin: 15px 0 0 24px;
  display: flex;
  flex-direction: column;
  gap: 7px;
}

.opt {
  display: flex;
  align-items: center;
  gap: 7px;
  height: 20px;
  white-space: nowrap;
}

.radio {
  width: 14px;
  height: 14px;
  box-sizing: border-box;
  border-radius: 50%;
  border: 1px solid #7a7a7a;
  background: #333;
}

.radio.on {
  border: 3.500px solid #d98a5a;
  background: #1a1a1a;
}

.square {
  width: 14px;
  height: 14px;
  box-sizing: border-box;
  border: 1px solid #7a7a7a;
  border-radius: 2px;
  background: #222;
}

.pane-sep {
  margin: 10px 0 0 24px;
  width: 249px;
  height: 1px;
  background: #444;
}

.prop {
  display: flex;
  align-items: center;
  margin-left: 35px;
}

.color-prop {
  margin-top: 7px;
  justify-content: space-between;
  width: 238px;
}

.color-btn {
  width: 50px;
  height: 30px;
  box-sizing: border-box;
  border: 1px solid #555;
  border-radius: 4px;
  background: #262626;
  display: flex;
  align-items: center;
  justify-content: flex-end;
  gap: 4px;
  padding-right: 6px;
}

.color-btn > svg:first-child {
  stroke: none;
}

.lit-chev {
  color: #ddd;
}

.trans-prop {
  margin-top: 7px;
  height: 23px;
}

.trans-label {
  width: 89px;
  white-space: nowrap;
}

.slider {
  width: 59px;
  height: 1px;
  background: #999;
  position: relative;
}

.slider i {
  position: absolute;
  left: 0;
  top: -5px;
  width: 3px;
  height: 11px;
  background: #aaa;
}

.spin {
  margin-left: 9px;
  width: 80px;
  height: 23px;
  box-sizing: border-box;
  border: 1px solid #444;
  border-radius: 4px;
  background: #1c1c1c;
  display: flex;
  align-items: center;
  justify-content: space-between;
  padding: 0 6px;
  color: #bbb;
}

.spin-arrows {
  display: flex;
  flex-direction: column;
  gap: 2px;
  color: #888;
}

.pane-actions {
  position: absolute;
  left: 12px;
  top: 810px;
  display: flex;
  gap: 11px;
}

.act {
  height: 26px;
  width: 88px;
  box-sizing: border-box;
  border: 1px solid #4a4a4a;
  border-radius: 4px;
  background: #262626;
  color: #eaeaea;
  font-size: 13px;
}

.act.disabled {
  width: 124px;
  background: #141414;
  border-color: #2c2c2c;
  color: #555;
}

/* status bar */
.statusbar {
  height: 26px;
  flex: none;
  display: flex;
  align-items: center;
  justify-content: space-between;
  background: #1c1c1c;
  padding-left: 12px;
  font-size: 11.4px;
  color: #d8d8d8;
  position: relative;
}

.statusbar::after {
  content: "";
  position: absolute;
  left: 745px;
  right: 350px;
  bottom: 0;
  height: 1px;
  background: #e8e8e8;
}

.st-right {
  display: flex;
  align-items: center;
  width: 395px;
  color: #e0e0e0;
}

.gap-s {
  margin-left: 29px;
}

.zoom-minus {
  margin-left: 23px;
  width: 10px;
  font-size: 14px;
}

.zoom-track {
  width: 111px;
  height: 1px;
  margin-left: 5px;
  background: #bbb;
  position: relative;
}

.zoom-center {
  position: absolute;
  left: 55px;
  top: -3px;
  width: 1px;
  height: 7px;
  background: #ccc;
}

.zoom-knob {
  position: absolute;
  left: 61px;
  top: -6px;
  width: 6px;
  height: 13px;
  background: #aaa;
}

.zoom-plus {
  margin-left: 5px;
  font-size: 15px;
}

.zoom-val {
  margin-left: 14px;
  white-space: nowrap;
  font-size: 12px;
}

.fit {
  margin-left: 12px;
}
</style>
